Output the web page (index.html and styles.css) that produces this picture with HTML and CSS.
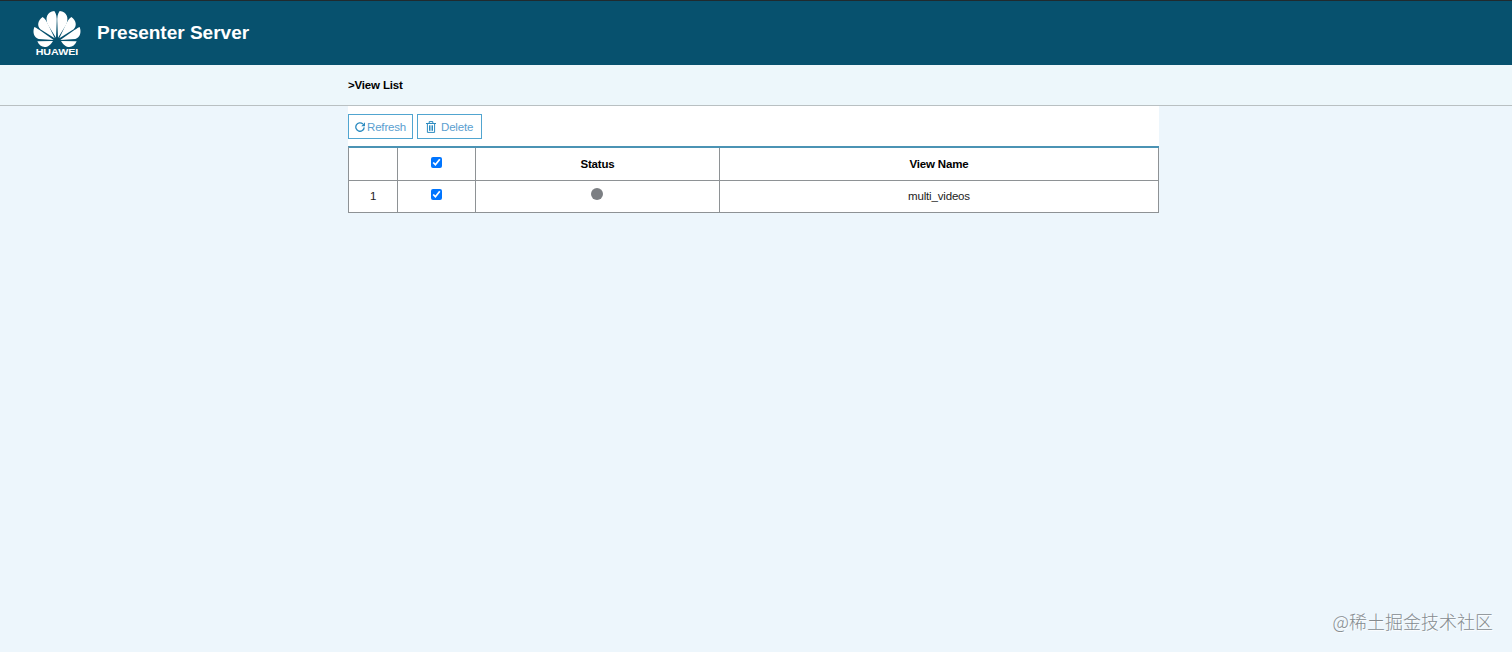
FILE: index.html
```html
<!DOCTYPE html>
<html lang="en">
<head>
<meta charset="utf-8">
<title>Presenter Server</title>
<link rel="stylesheet" href="styles.css">
</head>
<body>
<header class="header">
  <svg class="logo" viewBox="36 30 150 138">
    <defs>
      <g id="petals">
        <path d="M108 113L84 75C74 55 81 35 103 33C109 42 111 52 110 66Z"/>
        <path d="M104 115L61 88C50 77 54 60 68 51C76 57 80 64 84 73Z"/>
        <path d="M101 120L56 117C42 112 37 98 43 81C50 84 57 89 64 94Z"/>
        <path d="M99 123C91 136 84 141 74 141C64 141 57 135 52 124Z"/>
      </g>
    </defs>
    <use href="#petals"/>
    <use href="#petals" transform="translate(222 0) scale(-1 1)"/>
    <text class="logo-text" x="47" y="166" textLength="128" lengthAdjust="spacingAndGlyphs">HUAWEI</text>
  </svg>
  <h1 class="title">Presenter Server</h1>
</header>
<nav class="crumb">&gt;View List</nav>
<main class="panel">
  <div class="toolbar">
    <button class="btn btn-refresh"><svg class="icon-refresh" viewBox="0 0 10 10"><path d="M9.2 5.4A4.2 4.2 0 1 1 7.9 2"/><path class="solid" d="M10 .3V4.2H6.3Z"/></svg>Refresh</button>
    <button class="btn btn-delete"><svg class="icon-trash" viewBox="0 0 10 12"><path d="M0 2.5H10M3.2 2.3V.6H6.8V2.3M1.4 2.7V11.4H8.6V2.7M3.5 4.3V9.8M5 4.3V9.8M6.5 4.3V9.8"/></svg>Delete</button>
  </div>
  <table class="grid">
    <colgroup><col class="c-index"><col class="c-check"><col class="c-status"><col></colgroup>
    <thead><tr><th></th><th><input class="check" type="checkbox" checked></th><th>Status</th><th>View Name</th></tr></thead>
    <tbody><tr><td>1</td><td><input class="check" type="checkbox" checked></td><td><span class="dot"></span></td><td>multi_videos</td></tr></tbody>
  </table>
</main>
<div class="watermark">@稀土掘金技术社区</div>
</body>
</html>
```
FILE: styles.css
```css
* { box-sizing: border-box; }
body { margin: 0; height: 652px; overflow: hidden; background: #edf6fc; font: 11.5px "Liberation Sans", Arial, sans-serif; letter-spacing: -.17px; color: #222; }
.header { height: 65px; padding: 0 32px 1px; display: flex; align-items: center; background: #07516e; border-top: 1px solid #202a2e; }
.logo { width: 50px; height: 46px; fill: #fff; letter-spacing: 0; }
.logo-text { font: bold 27px "Liberation Sans", Arial, sans-serif; }
.title { margin: 0 0 0 15px; font-size: 19px; line-height: 22px; letter-spacing: 0; color: #fff; }
.crumb { height: 41px; padding-left: 348px; line-height: 40px; font-weight: bold; color: #000; background: #edf7fb; border-bottom: 1px solid #b9c0c2; }
.panel { width: 811px; margin-left: 348px; background: #fff; }
.toolbar { height: 40px; padding-top: 8px; display: flex; gap: 4px; }
.btn { width: 65px; height: 25px; padding: 0 0 0 6px; display: flex; align-items: center; background: #fff; border: 1px solid #51a5d0; border-radius: 0; font: inherit; letter-spacing: inherit; color: #5ba0d0; }
.btn svg { fill: none; stroke: #2c8bc0; flex: none; }
.btn-delete { padding-left: 8px; }
.icon-refresh { width: 10px; height: 10px; margin-right: 2px; stroke-width: 1.3; }
.btn .solid { fill: #2c8bc0; stroke: none; }
.icon-trash { width: 10px; height: 12px; margin-right: 5px; }
.grid { width: 811px; table-layout: fixed; border-collapse: separate; border-spacing: 0; border-top: 2px solid #4b93b4; border-left: 1px solid #8e9295; text-align: center; }
.c-index { width: 49px; }
.c-check { width: 78px; }
.c-status { width: 244px; }
.grid th, .grid td { height: 33px; padding: 0; border-right: 1px solid #8e9295; border-bottom: 1px solid #8e9295; }
.grid td { height: 32px; padding-bottom: 1px; }
.grid th { color: #000; }
.check { display: block; width: 11px; height: 11px; margin: -3px auto 0 33px; }
.dot { display: block; width: 12px; height: 12px; margin: -4px auto 0 115px; border-radius: 50%; background: #7c7f83; }
.watermark { position: absolute; right: 19px; bottom: 18px; font: 300 18px/26px "Noto Sans CJK SC", sans-serif; letter-spacing: 0; color: #858b8f; text-shadow: 1px 1px 1px #fff; }
```
